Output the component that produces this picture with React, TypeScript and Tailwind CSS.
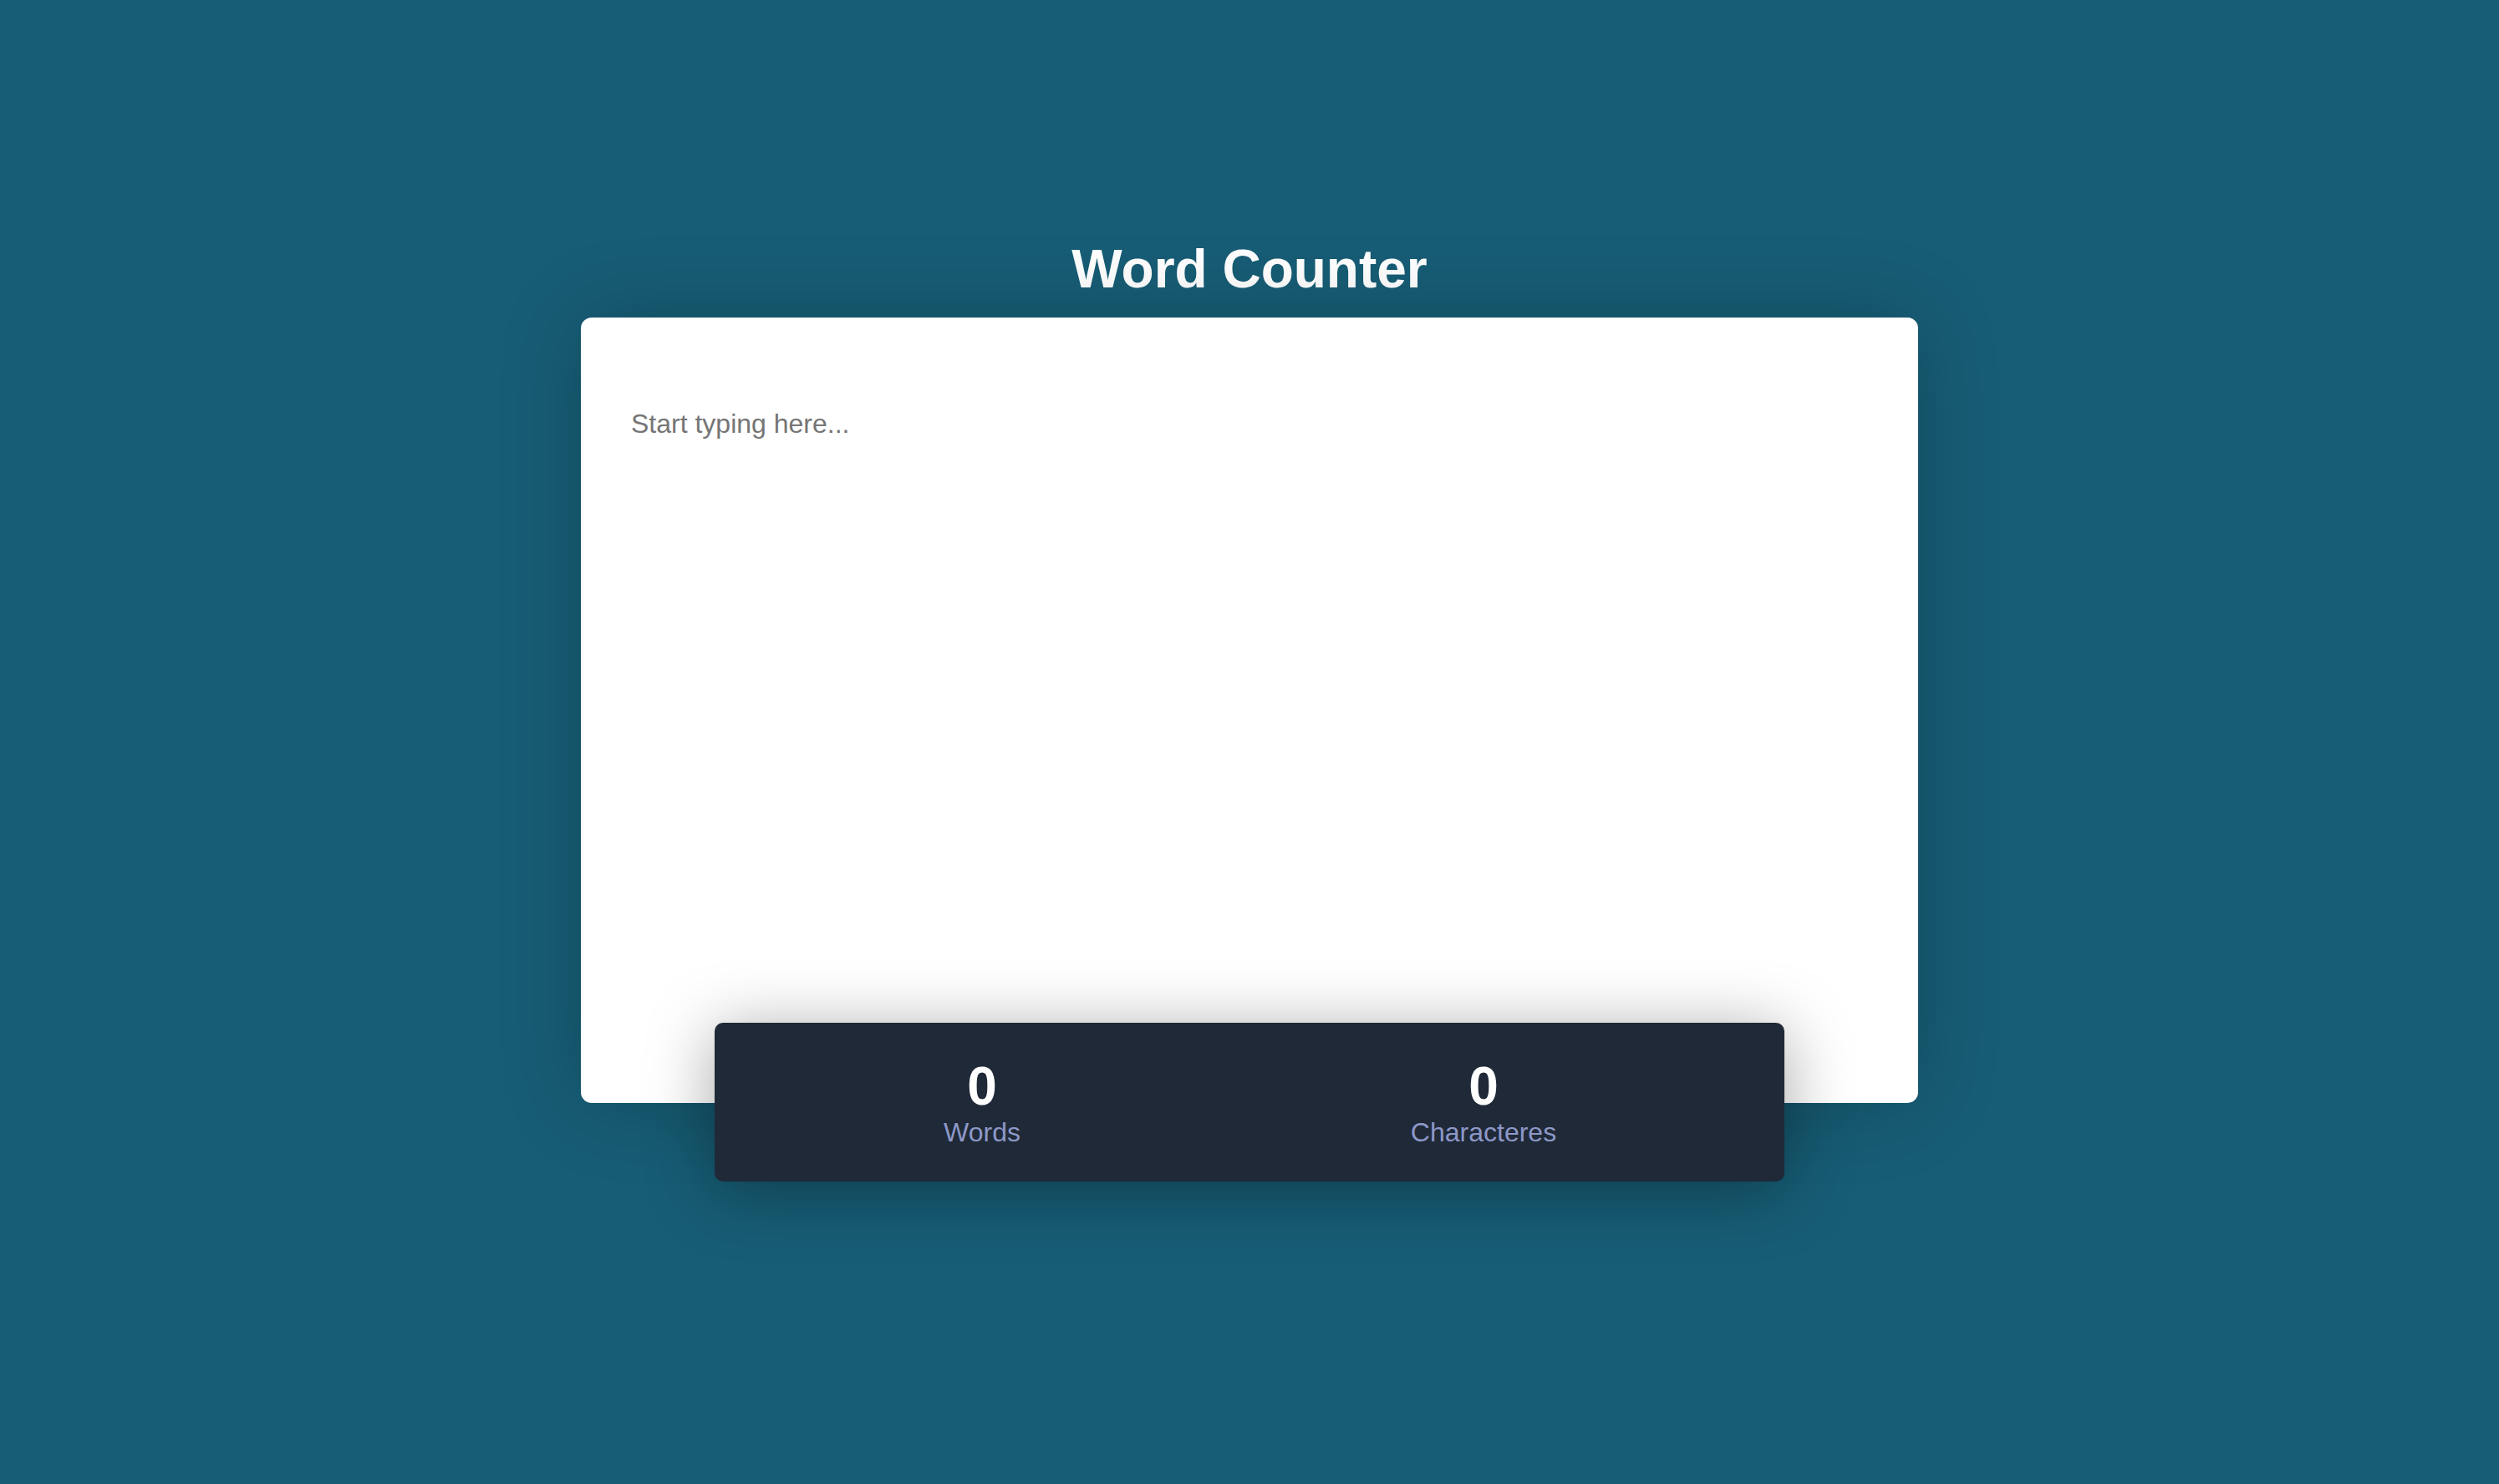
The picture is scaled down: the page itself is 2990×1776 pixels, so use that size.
import { useState } from "react";

function Stat({ value, label }: { value: number; label: string }) {
  return (
    <div className="flex flex-col items-center">
      <span className="text-[64px] font-bold leading-[1.15] text-white">{value}</span>
      <span className="text-[32px] leading-[1.15] text-[#8d98c8]">{label}</span>
    </div>
  );
}

export default function App() {
  const [text, setText] = useState("");

  const words = text.trim() ? text.trim().split(/\s+/).length : 0;
  const characters = text.length;

  return (
    <div
      className="flex min-h-screen flex-col items-center bg-[#175d75] pt-[286px]"
      style={{ fontFamily: '"Liberation Sans", Arial, sans-serif' }}
    >
      <h1 className="mb-[20px] text-[64px] font-bold leading-[1.15] text-white">Word Counter</h1>

      <div className="relative h-[940px] w-[1600px] rounded-[13px] bg-white shadow-[0_0_100px_rgba(0,0,0,0.2)]">
        <textarea
          value={text}
          onChange={(event) => setText(event.target.value)}
          placeholder="Start typing here..."
          className="h-full w-full resize-none rounded-[13px] bg-transparent px-[60px] pt-[109px] pb-[120px] text-[32px] leading-[1.15] text-[#333] outline-none placeholder:text-[#757575]"
        />

        <div className="absolute bottom-[-94px] left-[160px] grid h-[190px] w-[1280px] grid-cols-2 rounded-[10px] bg-[#1f2937] pt-[40px] pr-[60px] pl-[20px] shadow-[0_10px_80px_rgba(0,0,0,0.35)]">
          <Stat value={words} label="Words" />
          <Stat value={characters} label="Characteres" />
        </div>
      </div>
    </div>
  );
}
